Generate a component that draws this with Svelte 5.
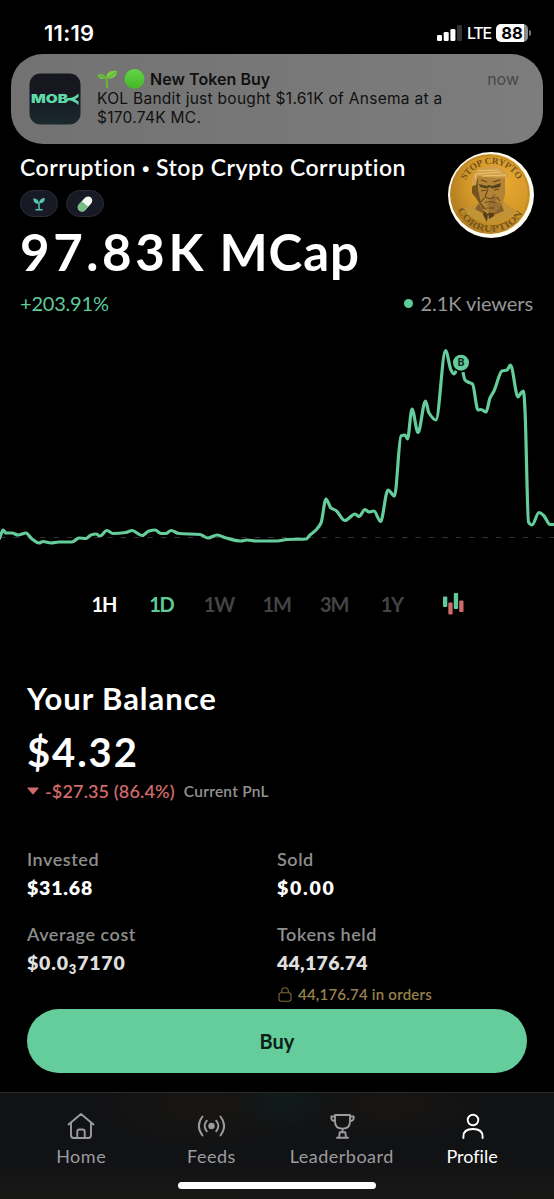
<script lang="ts">
    const points: [number, number][] = [
        [-2, 540], [0, 537], [3, 530], [6, 533], [12, 533], [18, 535], [26, 533], [32, 539], [39, 543], [43, 541.5],
        [51, 543], [59, 542], [72, 542], [79, 538], [86, 538.5], [91, 535], [96, 534], [100, 536], [107, 530.5], [113, 533.5],
        [126, 532.5], [132, 530.5], [142, 535.5], [149, 531], [155, 530], [161, 533.5], [166, 533.5], [171, 530.5], [179, 533.5],
        [200, 534.5], [208, 538], [217, 535], [226, 538], [241, 541], [247, 540], [256, 541], [277, 541], [287, 539.5],
        [306, 539], [310, 535], [316, 530], [321, 523], [326, 499], [331, 508], [336, 510.5], [345, 520.5], [355, 514],
        [359, 516.5], [365, 509.5], [369, 512], [374, 511], [380.5, 521.5], [388, 490], [394.5, 496], [401, 436], [405, 435],
        [407.5, 439], [412, 409], [418, 432.5], [425.5, 401], [429, 413], [436, 420], [445.5, 350.5], [451, 370], [454, 374],
        [460.5, 363], [465, 380], [468, 382], [472.5, 384], [478, 410], [481, 409.5], [486, 412], [490, 398], [494, 391],
        [502, 371], [507, 370], [510.5, 365], [518, 397], [521, 393], [523.5, 391], [525, 410], [528.5, 522], [532, 525],
        [539, 512.5], [544, 516], [550, 524.5], [556, 524.5],
    ];

    // monotone tangents so that the curve never overshoots a point
    function smooth(pts: [number, number][]) {
        const slope = (i: number) => (pts[i + 1][1] - pts[i][1]) / (pts[i + 1][0] - pts[i][0]);
        const tangents = pts.map((_, i) => {
            if (i === 0 || i === pts.length - 1) return 0;
            const a = slope(i - 1);
            const b = slope(i);
            return a * b <= 0 ? 0 : (2 * a * b) / (a + b);
        });
        let d = `M${pts[0][0]} ${pts[0][1]}`;
        for (let i = 1; i < pts.length; i++) {
            const [x0, y0] = pts[i - 1];
            const [x1, y1] = pts[i];
            const h = (x1 - x0) / 3;
            d += `C${x0 + h} ${y0 + tangents[i - 1] * h} ${x1 - h} ${y1 - tangents[i] * h} ${x1} ${y1}`;
        }
        return d;
    }

    const line = smooth(points);
    const ranges = ["1H", "1D", "1W", "1M", "3M", "1Y"];
    let selected = $state("1D");
</script>

<div class="screen">
    <div class="status">
        <span class="time">11:19</span>
        <div class="signals">
            <svg width="25" height="16" viewBox="0 0 25 16">
                <rect x="0" y="10" width="5" height="6" rx="1.3" fill="#fff" />
                <rect x="6.7" y="7" width="5" height="9" rx="1.3" fill="#fff" />
                <rect x="13.4" y="4" width="5" height="12" rx="1.3" fill="#fff" />
                <rect x="20" y="0" width="5" height="16" rx="1.3" fill="#343434" />
            </svg>
            <span class="lte">LTE</span>
            <span class="battery">88</span>
            <span class="battery-tip"></span>
        </div>
    </div>

    <div class="notification">
        <svg class="app-icon" width="52" height="52" viewBox="0 0 52 52">
            <defs>
                <linearGradient id="icon-fill" x1="0" y1="0" x2="0" y2="1">
                    <stop offset=".4" stop-color="#16171f" />
                    <stop offset="1" stop-color="#1b2a2e" />
                </linearGradient>
            </defs>
            <rect x=".5" y=".5" width="51" height="51" rx="11" fill="url(#icon-fill)" />
            <text x="2" y="30.3" textLength="37" lengthAdjust="spacingAndGlyphs" class="logo">MOB</text>
            <path d="M38 25h3q4-.5 8.5-4.5v3.5l-3.5 2.3 3.5 2.3v3.5q-4.5-4-8.5-4.5h-3z" fill="#5fd8aa" />
        </svg>
        <div class="message">
            <div class="message-title">
                <svg width="49" height="20" viewBox="0 0 49 20">
                    <path d="M10 19C10.5 12 9.5 9 7 7" fill="none" stroke="#65b839" stroke-width="2" />
                    <path d="M8 8C6 11 2 11 .5 6 4 4 7 5 8 8Z" fill="#70c63e" />
                    <path d="M10 10C8 4 13 1 20 2 20 8 15 10 10 10Z" fill="#79cf42" />
                    <path d="M2 6.5 7 8M10 10 19 3" stroke="#4b9829" stroke-width=".8" />
                    <defs>
                        <linearGradient id="dot-fill" x1="0" y1="0" x2="0" y2="1">
                            <stop offset="0" stop-color="#62d548" />
                            <stop offset="1" stop-color="#44b525" />
                        </linearGradient>
                    </defs>
                    <circle cx="37.5" cy="10" r="10" fill="url(#dot-fill)" />
                </svg>
                <strong>New Token Buy</strong>
                <span class="now">now</span>
            </div>
            <p>KOL Bandit just bought $1.61K of Ansema at a<br />$170.74K MC.</p>
        </div>
    </div>

    <header>
        <div class="info">
            <h1>Corruption <span class="bullet">•</span> Stop Crypto Corruption</h1>
            <div class="tags">
                <span class="tag">
                    <svg width="12" height="14" viewBox="0 0 12 14">
                        <path d="M6 12V6M3 12.8h6" stroke="#55c6ab" stroke-width="1.5" stroke-linecap="round" />
                        <path d="M5.8 6.8C1.5 6.8.4 4.5.3 1.5 3.8 1.5 5.8 3 5.8 6.8ZM6.2 6.2C6.2 2.8 8.5 1 11.8.9c0 3.2-1.6 5.5-5.6 5.3Z" fill="#55c6ab" />
                    </svg>
                </span>
                <span class="tag">
                    <svg width="16" height="16" viewBox="0 0 16 16">
                        <g transform="rotate(-48 8 8)">
                            <rect x="-.8" y="3.8" width="17.6" height="8.4" rx="4.2" fill="#f5f7f5" />
                            <path d="M8 3.8v8.4H3.4a4.2 4.2 0 0 1 0-8.4z" fill="#77bd83" />
                        </g>
                    </svg>
                </span>
            </div>
            <div class="price"><span class="figure">97.83K</span> <span class="unit">MCap</span></div>
        </div>
        <svg class="coin" width="86" height="86" viewBox="0 0 86 86">
            <defs>
                <radialGradient id="gold" cx=".65" cy=".35" r=".75">
                    <stop offset="0" stop-color="#e9a832" />
                    <stop offset=".6" stop-color="#d29727" />
                    <stop offset="1" stop-color="#a87420" />
                </radialGradient>
                <path id="arc-top" d="M15.5 34A29 29 0 0 1 72 35" />
                <path id="arc-bottom" d="M8.5 54A36 36 0 0 0 77.5 54" />
            </defs>
            <circle cx="43" cy="43" r="43" fill="#fffdf2" />
            <circle cx="42" cy="42" r="40" fill="url(#gold)" />
            <circle cx="42" cy="42" r="38.5" fill="none" stroke="#b98728" stroke-width="1" />
            <path d="M14 57 31 50 40 58 53 48 68 59Q59 71 40 71 23 68 14 57Z" fill="#c29335" />
            <path d="m31 51 7 12-11-6zM52 49l-11 16 15-6z" fill="#86602a" />
            <path d="m36 59 4 3-1 8-4-7zM40 61l5-3 1 6-5 3z" fill="#563d1a" />
            <path d="M26 27Q24 18 35 17 52 13 57 26L57 43Q54 55 47 60 39 63 32 54L27 43Q23 39 25 34Z" fill="#b38435" />
            <path d="M27 29 30 25 30 38 33 51 39 58 35 57 28 46 24 41V35z" fill="#74531f" />
            <path d="m46 41 4 6-3 2 7 3-6 7-9 1 4-4-4-3 4-5z" fill="#82602b" opacity=".55" />
            <path d="m31 32 8 2 2-1 3 1 9-3-1 4-8 1.5-2-1.5-3 1.5-7-1.5z" fill="#55401d" />
            <path d="M40 37l-3 8 5 2 4-2M37 51q5-3 10 0M33 39l5-1M46 38l5-1M36 46l-3 4M49 45l3 4M33 28l6 2M45 30l7-2M39 56h7" fill="none" stroke="#604519" stroke-width="1.1" />
            <path d="M24 34Q23 18 35 16 47 11 59 20L61 25Q48 27 30 24L28 33Z" fill="#d1a04b" />
            <path d="m28 22 25-2M30 19l20-1M27 27l1-6M34 24l24-1" stroke="#ecc471" stroke-width="1" />
            <text class="coin-text"><textPath href="#arc-top" startOffset="6" textLength="64">STOP CRYPTO</textPath></text>
            <text class="coin-text"><textPath href="#arc-bottom" startOffset="4" textLength="80" lengthAdjust="spacingAndGlyphs">CORRUPTION</textPath></text>
        </svg>
    </header>

    <div class="stats">
        <span class="change">+203.91%</span>
        <span class="viewers"><i></i>2.1K viewers</span>
    </div>

    <svg class="chart" width="554" height="240" viewBox="0 330 554 240">
        <path d="M0 537.5H554" stroke="#333239" stroke-width="1.2" stroke-dasharray="5.5 7.9" />
        <path d={line} fill="none" stroke="#65cc9b" stroke-width="3.2" stroke-linejoin="round" />
        <circle cx="461" cy="362.7" r="9.6" fill="#000" />
        <circle cx="461" cy="362.7" r="8" fill="#65cc9b" />
        <text x="461" y="366.4" class="marker">B</text>
    </svg>

    <div class="ranges">
        {#each ranges as range}
            <button class:selected={selected === range} class:available={range === "1H"} onclick={() => (selected = range)}>{range}</button>
        {/each}
        <button class="candles" aria-label="Candles">
            <svg width="21" height="22" viewBox="0 0 21 22">
                <rect x="0" y="3.5" width="4.3" height="10.5" rx="1" fill="#5fcb9a" />
                <rect x="5.3" y="9.5" width="4.3" height="12" rx="1" fill="#d0696a" />
                <rect x="10.8" y="0" width="4.3" height="16" rx="1" fill="#5fcb9a" />
                <rect x="16.2" y="7.5" width="4.3" height="11.5" rx="1" fill="#d0696a" />
            </svg>
        </button>
    </div>

    <section class="balance">
        <h2>Your Balance</h2>
        <div class="amount">$4.32</div>
        <div class="pnl">
            <svg width="12" height="8" viewBox="0 0 12 8"><path d="M1 .5h10q1 0 .3.9L6.7 7q-.7.8-1.4 0L.7 1.4Q0 .5 1 .5Z" fill="#d0696a" /></svg>
            <span class="loss">-$27.35 (86.4%)</span>
            <span class="pnl-label">Current PnL</span>
        </div>
        <div class="holdings">
            <div>
                <div class="label">Invested</div>
                <div class="value">$31.68</div>
            </div>
            <div>
                <div class="label">Sold</div>
                <div class="value zero">$0.00</div>
            </div>
            <div>
                <div class="label">Average cost</div>
                <div class="value faded">$0.0<small>3</small>7170</div>
            </div>
            <div>
                <div class="label">Tokens held</div>
                <div class="value faded tokens">44,176.74</div>
                <div class="orders">
                    <svg width="14" height="15" viewBox="0 0 14 15" fill="none" stroke="#80693a" stroke-width="1.1">
                        <rect x="1" y="5.7" width="12" height="8.6" rx="2.2" />
                        <path d="M3.7 5.5V4a3.3 3.3 0 0 1 6.6 0v1.5" />
                    </svg>
                    <span>44,176.74 in orders</span>
                </div>
            </div>
        </div>
    </section>

    <button class="buy">Buy</button>

    <nav>
        <a href="#home">
            <svg width="28" height="28" viewBox="0 0 28 28">
                <path d="M1.5 12.5 14 2l12.5 10.5M4 11v12.3Q4 26 6.7 26h14.6q2.7 0 2.7-2.7V11M10.3 25.5v-6q0-2 2-2h3.4q2 0 2 2v6" />
            </svg>
            <span>Home</span>
        </a>
        <a href="#feeds">
            <svg width="28" height="28" viewBox="0 0 28 28">
                <circle cx="14.5" cy="14" r="3.2" fill="currentColor" stroke="none" />
                <path d="M9.8 8.7Q5.5 14 9.8 19.3M19.2 8.7Q23.5 14 19.2 19.3M5.5 4.5Q-1.8 14 5.5 23.5M23.5 4.5Q30.8 14 23.5 23.5" />
            </svg>
            <span>Feeds</span>
        </a>
        <a href="#leaderboard">
            <svg width="28" height="28" viewBox="0 0 28 28">
                <path d="M7 3h15v6.5q0 7-7.5 7.3Q7 16.5 7 9.5zM7 4.5H3.3v1.3Q3.3 9 7 9M22 4.5h3.7v1.3Q25.7 9 22 9M14.5 17v3M11 25.5 11.7 20.3h5.6l.7 5.2M9 25.7h11" />
            </svg>
            <span>Leaderboard</span>
        </a>
        <a href="#profile" class="active">
            <svg width="28" height="28" viewBox="0 0 28 28">
                <circle cx="15" cy="8" r="5.3" />
                <path d="M5.4 26v-1.5Q5.4 17 15 17t9.6 7.5V26" />
            </svg>
            <span>Profile</span>
        </a>
        <div class="home-indicator"></div>
    </nav>
</div>

<style>
    :global(body) {
        background: #000;
    }

    .screen {
        position: relative;
        width: 554px;
        height: 1199px;
        overflow: hidden;
        display: flex;
        flex-direction: column;
        background: #000;
        color: #fff;
        font-family: Lato, sans-serif;
        font-variant-ligatures: none;
        white-space: nowrap;
    }

    svg {
        display: block;
        flex: none;
    }

    button {
        padding: 0;
        border: 0;
        background: none;
        font: inherit;
        color: inherit;
    }

    .status {
        display: flex;
        justify-content: space-between;
        align-items: center;
        height: 54px;
        padding: 12px 23px 0 44px;
        box-sizing: border-box;
        margin-bottom: 99px;
        font-family: Inter, sans-serif;
    }

    .time {
        font-size: 22px;
        font-weight: 600;
        letter-spacing: 0.3px;
    }

    .signals {
        display: flex;
        align-items: center;
    }

    .lte {
        width: 29px;
        margin-left: 5px;
        font-size: 16px;
        font-weight: 500;
        letter-spacing: -1.2px;
    }

    .battery {
        width: 32px;
        height: 18px;
        line-height: 18px;
        border-radius: 5px;
        background: linear-gradient(90deg, #fff 28px, #8b8b8b 28px);
        color: #000;
        font-size: 16.5px;
        font-weight: 700;
        text-align: center;
    }

    .battery-tip {
        width: 2px;
        height: 6px;
        margin-left: 1px;
        border-radius: 0 2px 2px 0;
        background: #777;
    }

    .notification {
        position: absolute;
        top: 54px;
        left: 11px;
        display: flex;
        width: 532px;
        height: 90px;
        box-sizing: border-box;
        padding: 15px 24px 0 18px;
        border-radius: 32px;
        background: linear-gradient(90deg, #727272, #7d7d7d);
        color: #101010;
        font-family: Inter, sans-serif;
    }

    .app-icon {
        margin-top: 4px;
    }

    .logo {
        fill: #5fd8aa;
        font: 900 12px Inter, sans-serif;
    }

    .message {
        flex: 1;
        margin-left: 16px;
    }

    .message-title {
        display: flex;
        align-items: center;
        height: 20px;
        font-size: 16px;
    }

    .message-title strong {
        margin-left: 4px;
        font-weight: 600;
        letter-spacing: 0.05px;
    }

    .now {
        margin-left: auto;
        color: #484848;
    }

    p {
        margin: 0;
        font-size: 15.5px;
        line-height: 19px;
        letter-spacing: 0.28px;
    }

    header {
        display: flex;
        justify-content: space-between;
        padding: 0 20px;
    }

    h1 {
        margin: 0;
        font-size: 23px;
        line-height: 28px;
        font-weight: 600;
        letter-spacing: 0.5px;
    }

    .bullet {
        font-family: "Liberation Sans", sans-serif;
        font-size: 20px;
        line-height: 0;
    }

    .tags {
        display: flex;
        gap: 8px;
        margin-top: 9px;
    }

    .tag {
        display: flex;
        align-items: center;
        justify-content: center;
        width: 36px;
        height: 25px;
        border: 1px solid #2b2c34;
        border-radius: 14px;
        background: #171a25;
    }

    .price {
        margin-top: 5px;
        font-size: 51px;
        line-height: 60px;
        font-weight: 700;
    }

    .figure {
        letter-spacing: 3.6px;
    }

    .unit {
        letter-spacing: 0.9px;
    }

    .coin {
        margin: -1px 0 0;
    }

    .coin-text {
        fill: #75551e;
        font: 700 9.5px "Liberation Serif", serif;
    }

    .stats {
        display: flex;
        justify-content: space-between;
        padding: 0 21px 0 20px;
        margin-top: 9px;
        font-size: 20px;
        line-height: 24px;
    }

    .change {
        color: #5fcb9a;
        letter-spacing: -0.2px;
    }

    .viewers {
        display: flex;
        align-items: center;
        color: #96969b;
        letter-spacing: -0.08px;
    }

    .viewers i {
        width: 9px;
        height: 9px;
        margin-right: 8px;
        border-radius: 50%;
        background: #5fcb9a;
    }

    .chart {
        margin-top: 15px;
    }

    .marker {
        fill: #10251c;
        font: 900 10.5px Lato, sans-serif;
        text-anchor: middle;
    }

    .ranges {
        display: flex;
        padding-left: 75px;
        margin-top: 22px;
        height: 24px;
    }

    .ranges button {
        width: 57.6px;
        font-size: 20px;
        font-weight: 700;
        letter-spacing: -1.2px;
        color: #444;
    }

    .ranges .available {
        color: #fff;
    }

    .ranges .selected {
        color: #5fcb9a;
    }

    .ranges .candles {
        display: flex;
        margin: 1px 0 0 22px;
    }

    .balance {
        padding: 0 27px;
        margin-top: 64px;
    }

    h2 {
        margin: 0;
        font-size: 31px;
        line-height: 36px;
        font-weight: 700;
        letter-spacing: 0.95px;
    }

    .amount {
        margin-top: 12px;
        font-size: 40px;
        line-height: 48px;
        font-weight: 700;
        letter-spacing: 1.9px;
    }

    .pnl {
        display: flex;
        align-items: center;
        height: 24px;
        margin-top: 3px;
    }

    .loss {
        margin: 0 9px 0 6px;
        color: #d0696a;
        font-size: 18px;
        font-weight: 600;
        letter-spacing: 0.15px;
    }

    .pnl-label {
        color: #929292;
        font-size: 15.5px;
        font-weight: 600;
        letter-spacing: 0.25px;
    }

    .holdings {
        display: grid;
        grid-template-columns: 250px 250px;
        grid-template-rows: 75px 75px;
        margin-top: 44px;
    }

    .label {
        color: #8e8e8e;
        font-size: 18px;
        line-height: 25px;
        font-weight: 600;
        letter-spacing: 0.55px;
    }

    .value {
        margin-top: 3px;
        font-size: 19.5px;
        line-height: 26px;
        font-weight: 800;
        letter-spacing: 0.8px;
    }

    .zero {
        letter-spacing: 1.7px;
    }

    .faded {
        color: #dedede;
    }

    .tokens {
        letter-spacing: 0.25px;
    }

    small {
        font-size: 13px;
        line-height: 0;
        position: relative;
        top: 4px;
    }

    .orders {
        display: flex;
        align-items: center;
        gap: 6px;
        margin: 8px 0 0 1px;
        color: #96804b;
        font-size: 15px;
        line-height: 20px;
        font-weight: 600;
        letter-spacing: 0.22px;
    }

    .buy {
        flex: none;
        position: relative;
        width: 500px;
        height: 64px;
        margin: 12px 27px 0;
        border-radius: 32px;
        background: #65cc9b;
        color: #0c2018;
        font-size: 20px;
        font-weight: 700;
    }

    nav {
        position: relative;
        display: flex;
        flex: none;
        height: 107px;
        box-sizing: border-box;
        margin-top: auto;
        padding: 19px 16px 0;
        border-top: 1px solid #2b2b2c;
        background:
            radial-gradient(ellipse 50px 30px at 285px 10px, #111b1b, transparent),
            radial-gradient(ellipse 110px 45px at 200px 12px, #181613, transparent),
            radial-gradient(ellipse 100px 35px at 390px 12px, #181613, transparent),
            linear-gradient(#111214 60%, #191817);
    }

    nav a {
        display: flex;
        flex-direction: column;
        align-items: center;
        width: 130.3px;
        color: #9c9c9f;
        text-decoration: none;
        font-size: 18px;
        line-height: 24px;
        letter-spacing: 0.5px;
    }

    nav a svg {
        margin-bottom: 4px;
        fill: none;
        stroke: currentColor;
        stroke-width: 1.9;
        stroke-linecap: round;
        stroke-linejoin: round;
    }

    nav .active {
        color: #fff;
        letter-spacing: 0;
    }

    .home-indicator {
        position: absolute;
        left: 178px;
        bottom: 10.5px;
        width: 198px;
        height: 7px;
        border-radius: 4px;
        background: #fff;
    }
</style>
